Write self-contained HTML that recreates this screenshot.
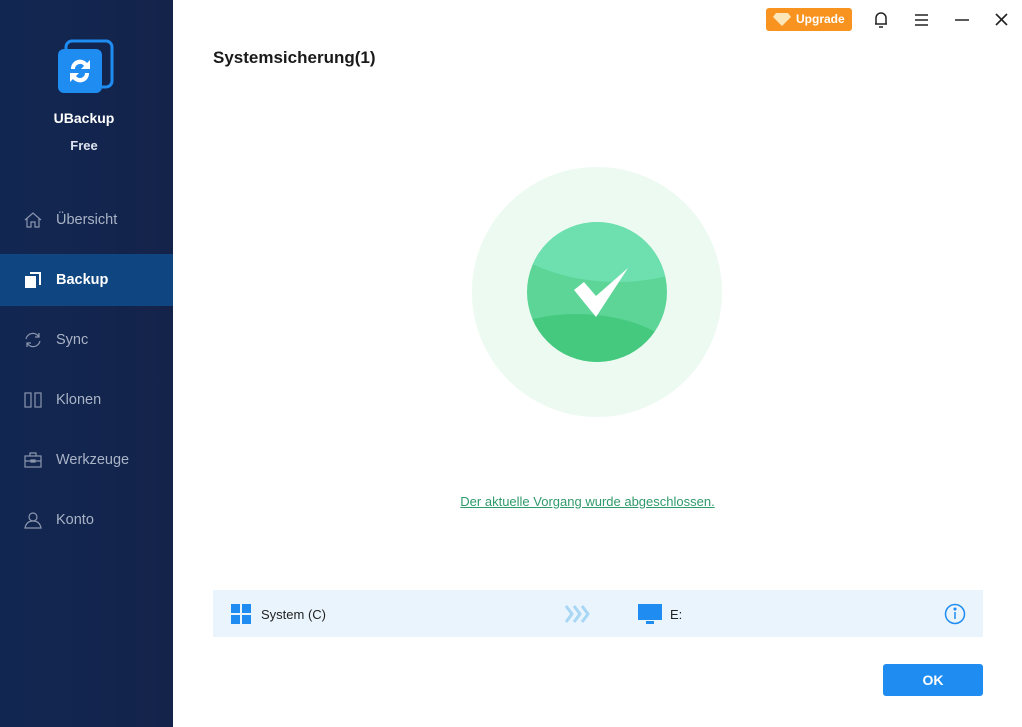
<!DOCTYPE html>
<html><head><meta charset="utf-8"><style>
*{margin:0;padding:0;box-sizing:border-box}
body{width:1022px;height:727px;overflow:hidden;background:#fff;font-family:"Liberation Sans","DejaVu Sans",sans-serif;position:relative}
.side{position:absolute;left:0;top:0;width:173px;height:727px;background:linear-gradient(90deg,#112752,#14234a)}
.nav{position:absolute;left:0;width:173px;height:52px;color:#a9b3c6;font-size:14.5px;display:flex;align-items:center}
.nav span{position:absolute;left:56px}
.nav svg{position:absolute;left:24px}
.act{background:#0f4580;color:#fff;font-weight:bold}
</style></head><body>
<div class="side">
  <svg style="position:absolute;left:57px;top:39px" width="58" height="58" viewBox="0 0 58 58">
    <rect x="9" y="2" width="46" height="46" rx="6" fill="none" stroke="#1e8cf0" stroke-width="3"/>
    <rect x="1" y="10" width="44" height="44" rx="6" fill="#1e8cf0"/>
    <path d="M14 30a9 9 0 0 1 16-6l3-3v9h-9l3-3a5 5 0 0 0-9 3z" fill="#fff"/>
    <path d="M32 34a9 9 0 0 1-16 6l-3 3v-9h9l-3 3a5 5 0 0 0 9-3z" fill="#fff"/>
  </svg>
  <div style="position:absolute;left:0;width:168px;top:110px;text-align:center;color:#fff;font-weight:bold;font-size:14px">UBackup</div>
  <div style="position:absolute;left:0;width:168px;top:138px;text-align:center;color:#dde3ee;font-weight:bold;font-size:13px">Free</div>
  <div class="nav" style="top:194px"><svg width="18" height="18" viewBox="0 0 18 18" fill="none" stroke="#8b96ad" stroke-width="1.2"><path d="M1 9L9 2l8 7M3 7.5V16h4v-5h4v5h4V7.5"/></svg><span>Übersicht</span></div>
  <div class="nav act" style="top:254px"><svg width="18" height="18" viewBox="0 0 18 18"><path d="M6 2h10v12" stroke="#fff" stroke-width="2" fill="none"/><rect x="1" y="5" width="11" height="12" fill="#fff"/></svg><span>Backup</span></div>
  <div class="nav" style="top:314px"><svg width="18" height="18" viewBox="0 0 18 18" fill="none" stroke="#8b96ad" stroke-width="1.2"><path d="M2 8a7 7 0 0 1 13-2M16 10a7 7 0 0 1-13 2M15 2v4h-4M3 16v-4h4"/></svg><span>Sync</span></div>
  <div class="nav" style="top:374px"><svg width="18" height="18" viewBox="0 0 18 18" fill="none" stroke="#8b96ad" stroke-width="1.2"><rect x="1" y="2" width="6" height="14"/><rect x="11" y="2" width="6" height="14"/></svg><span>Klonen</span></div>
  <div class="nav" style="top:434px"><svg width="18" height="18" viewBox="0 0 18 18" fill="none" stroke="#8b96ad" stroke-width="1.2"><rect x="1" y="5" width="16" height="11"/><path d="M6 5V2h6v3M1 10h16M7 9h4v2H7z"/></svg><span>Werkzeuge</span></div>
  <div class="nav" style="top:494px"><svg width="18" height="18" viewBox="0 0 18 18" fill="none" stroke="#8b96ad" stroke-width="1.2"><circle cx="9" cy="6" r="4"/><path d="M1 17c1-5 4-7 8-7s7 2 8 7z"/></svg><span>Konto</span></div>
</div>

<div style="position:absolute;left:766px;top:8px;width:86px;height:23px;background:#f7931e;border-radius:3px;color:#fff;font-size:12px;font-weight:bold;line-height:23px;padding-left:30px">Upgrade</div>
<svg style="position:absolute;left:773px;top:13px" width="18" height="13" viewBox="0 0 18 13"><path d="M3 0h12l3 4-9 9-9-9z" fill="#fde6b8"/></svg>
<svg style="position:absolute;left:873px;top:11px" width="16" height="18" viewBox="0 0 16 18" fill="none" stroke="#222" stroke-width="1.5"><path d="M3 13V7a5 5 0 0 1 10 0v6H2h12M6 16h4"/></svg>
<svg style="position:absolute;left:914px;top:13px" width="16" height="14" viewBox="0 0 16 14" stroke="#222" stroke-width="1.5"><path d="M1 2h13M1 7h13M1 12h13"/></svg>
<svg style="position:absolute;left:955px;top:18px" width="14" height="4" stroke="#222" stroke-width="1.5"><path d="M0 2h14"/></svg>
<svg style="position:absolute;left:995px;top:13px" width="13" height="13" stroke="#222" stroke-width="1.6"><path d="M1 1l11 11M12 1L1 12"/></svg>

<div style="position:absolute;left:213px;top:48px;font-size:17px;font-weight:bold;color:#1a1a1a">Systemsicherung(1)</div>

<div style="position:absolute;left:472px;top:167px;width:250px;height:250px;border-radius:50%;background:#ecfaf1"></div>
<div style="position:absolute;left:527px;top:222px;width:140px;height:140px;border-radius:50%;overflow:hidden;background:#5cd597">
  <div style="position:absolute;left:-40px;top:-90px;width:260px;height:150px;border-radius:50%;background:#6ee0b0"></div>
  <div style="position:absolute;left:-60px;top:92px;width:220px;height:120px;border-radius:50%;background:#45c97f"></div>
</div>
<svg style="position:absolute;left:572px;top:268px" width="58" height="50" viewBox="0 0 58 50"><path d="M2 22l10-8 12 14L56 0 24 49z" fill="#fff"/></svg>

<div style="position:absolute;left:0;width:1175px;top:494px;text-align:center;font-size:13px;color:#2f9a6a;text-decoration:underline">Der aktuelle Vorgang wurde abgeschlossen.</div>

<div style="position:absolute;left:213px;top:590px;width:770px;height:47px;background:#eaf4fd"></div>
<svg style="position:absolute;left:231px;top:604px" width="20" height="20"><rect x="0" y="0" width="9" height="9" fill="#1e8cf0"/><rect x="11" y="0" width="9" height="9" fill="#1e8cf0"/><rect x="0" y="11" width="9" height="9" fill="#1e8cf0"/><rect x="11" y="11" width="9" height="9" fill="#1e8cf0"/></svg>
<div style="position:absolute;left:261px;top:607px;font-size:13px;color:#222">System (C)</div>
<svg style="position:absolute;left:564px;top:605px" width="30" height="18" fill="none" stroke="#a8d6f5" stroke-width="3"><path d="M2 1l6 8-6 8M10 1l6 8-6 8M18 1l6 8-6 8"/></svg>
<svg style="position:absolute;left:638px;top:604px" width="24" height="22"><rect x="0" y="0" width="24" height="16" fill="#1e8cf0"/><rect x="8" y="17" width="8" height="3" fill="#1e8cf0"/></svg>
<div style="position:absolute;left:670px;top:607px;font-size:13px;color:#222">E:</div>
<svg style="position:absolute;left:944px;top:603px" width="22" height="22" fill="none" stroke="#1e8cf0" stroke-width="1.5"><circle cx="11" cy="11" r="9.5"/><path d="M11 9v7"/><circle cx="11" cy="6" r="0.8" fill="#1e8cf0"/></svg>

<div style="position:absolute;left:883px;top:664px;width:100px;height:32px;background:#1e8cf0;border-radius:3px;color:#fff;font-weight:bold;font-size:14px;text-align:center;line-height:32px">OK</div>
</body></html>
